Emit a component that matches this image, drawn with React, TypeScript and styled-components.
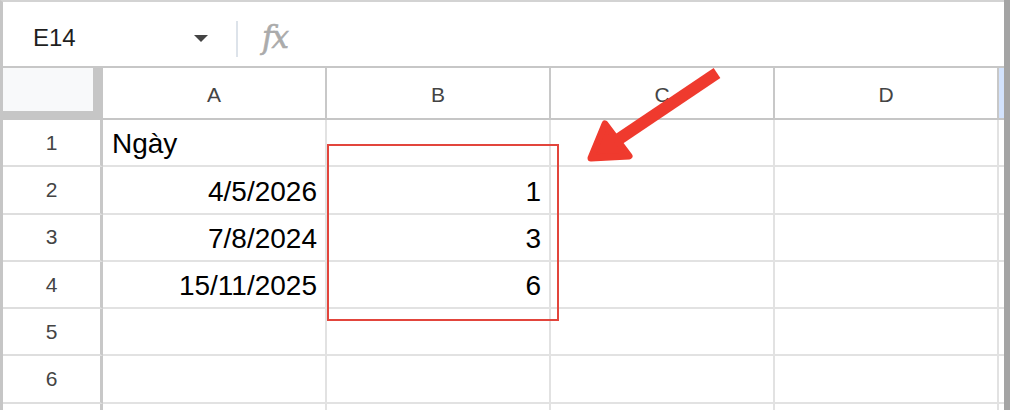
import React from "react";
import styled, { createGlobalStyle } from "styled-components";

const GlobalStyle = createGlobalStyle`
  body {
    margin: 0;
    background: #fff;
    font-family: "Liberation Sans", Arial, sans-serif;
  }
`;

const columns = ["A", "B", "C", "D"];

// row 7 is only a sliver at the bottom edge, its number is out of view
const rows: { label: string; a?: string; b?: string; alignA?: "left" | "right" }[] = [
  { label: "1", a: "Ngày", alignA: "left" },
  { label: "2", a: "4/5/2026", b: "1" },
  { label: "3", a: "7/8/2024", b: "3" },
  { label: "4", a: "15/11/2025", b: "6" },
  { label: "5" },
  { label: "6" },
  { label: "" },
];

export default function App() {
  return (
    <>
      <GlobalStyle />
      <Frame>
        <Sheet>
          <FormulaBar>
            <NameBox>
              <span>E14</span>
              <Caret />
            </NameBox>
            <Divider />
            <Fx>fx</Fx>
          </FormulaBar>
          <Grid>
            <Corner>
              <CornerInner />
            </Corner>
            {columns.map((c) => (
              <ColHeader key={c}>{c}</ColHeader>
            ))}
            <ColHeader $selected />
            {rows.map((r, i) => (
              <React.Fragment key={i}>
                <RowHeader>{r.label}</RowHeader>
                <Cell $align={r.alignA ?? "right"}>{r.a}</Cell>
                <Cell $align="right">{r.b}</Cell>
                <Cell />
                <Cell />
                <Cell $last />
              </React.Fragment>
            ))}
          </Grid>
        </Sheet>
        <Scrollbar />
        <Highlight />
        <Arrow viewBox="0 0 1010 410" width={1010} height={410}>
          <line x1={717} y1={73} x2={610} y2={145} stroke="#ef3a2e" strokeWidth={12} />
          <polygon
            points="605,124 629,156 591,158"
            fill="#ef3a2e"
            stroke="#ef3a2e"
            strokeWidth={7}
            strokeLinejoin="round"
          />
        </Arrow>
      </Frame>
    </>
  );
}

const Frame = styled.div`
  position: relative;
  width: 1010px;
  height: 410px;
  display: flex;
  overflow: hidden;
  background: #fff;
`;

const Sheet = styled.div`
  flex: 1;
  min-width: 0;
  display: flex;
  flex-direction: column;
  border-top: 2px solid #d3d3d3;
  border-left: 3px solid #c6c6c6;
`;

const Scrollbar = styled.div`
  width: 6px;
  background: #a4a4a4;
`;

const FormulaBar = styled.div`
  height: 66px;
  flex-shrink: 0;
  box-sizing: border-box;
  border-bottom: 2px solid #c7c7c7;
  display: flex;
  align-items: center;
`;

const NameBox = styled.div`
  width: 233px;
  box-sizing: border-box;
  padding: 8px 28px 0 30px;
  display: flex;
  align-items: center;
  justify-content: space-between;
  font-size: 24px;
  color: #1f1f1f;
`;

const Caret = styled.span`
  width: 0;
  height: 0;
  border-left: 7px solid transparent;
  border-right: 7px solid transparent;
  border-top: 7px solid #444;
`;

const Divider = styled.div`
  width: 2px;
  height: 36px;
  margin-top: 10px;
  background: #dde3ea;
`;

const Fx = styled.span`
  margin-left: 24px;
  margin-top: 6px;
  font-family: "DejaVu Serif", "Liberation Serif", serif;
  font-style: italic;
  font-size: 31px;
  color: #ababab;
  letter-spacing: -2px;
  -webkit-text-stroke: 0.6px #ababab;
`;

const Grid = styled.div`
  display: grid;
  grid-template-columns: 100px repeat(4, 224px) 1fr;
  grid-template-rows: 52px;
  grid-auto-rows: 47.3px;
`;

const Corner = styled.div`
  box-sizing: border-box;
  background: #c6c6c6;
  padding: 0 10px 9px 0;
`;

const CornerInner = styled.div`
  height: 100%;
  background: #f8f9fa;
`;

const ColHeader = styled.div<{ $selected?: boolean }>`
  box-sizing: border-box;
  display: flex;
  align-items: center;
  justify-content: center;
  padding-top: 4px;
  font-size: 21px;
  color: #444;
  background: ${(p) => (p.$selected ? "#d3e3fd" : "#fff")};
  border-right: ${(p) => (p.$selected ? "none" : "2px solid #c8c8c8")};
  border-bottom: 2px solid #c6c6c6;
`;

const RowHeader = styled.div`
  box-sizing: border-box;
  display: flex;
  align-items: center;
  justify-content: center;
  font-size: 21px;
  color: #444;
  border-right: 3px solid #c8c8c8;
  border-bottom: 2px solid #dedede;
`;

const Cell = styled.div<{ $align?: "left" | "right"; $last?: boolean }>`
  box-sizing: border-box;
  display: flex;
  align-items: flex-end;
  justify-content: ${(p) => (p.$align === "left" ? "flex-start" : "flex-end")};
  padding: 0 8px 5px 9px;
  font-size: 28px;
  color: #000;
  white-space: nowrap;
  border-right: ${(p) => (p.$last ? "none" : "2px solid #e2e2e2")};
  border-bottom: 2px solid #e2e2e2;
`;

const Highlight = styled.div`
  position: absolute;
  left: 327px;
  top: 144px;
  width: 232px;
  height: 177px;
  box-sizing: border-box;
  border: 2px solid #e2453c;
  pointer-events: none;
`;

const Arrow = styled.svg`
  position: absolute;
  left: 0;
  top: 0;
  pointer-events: none;
`;
